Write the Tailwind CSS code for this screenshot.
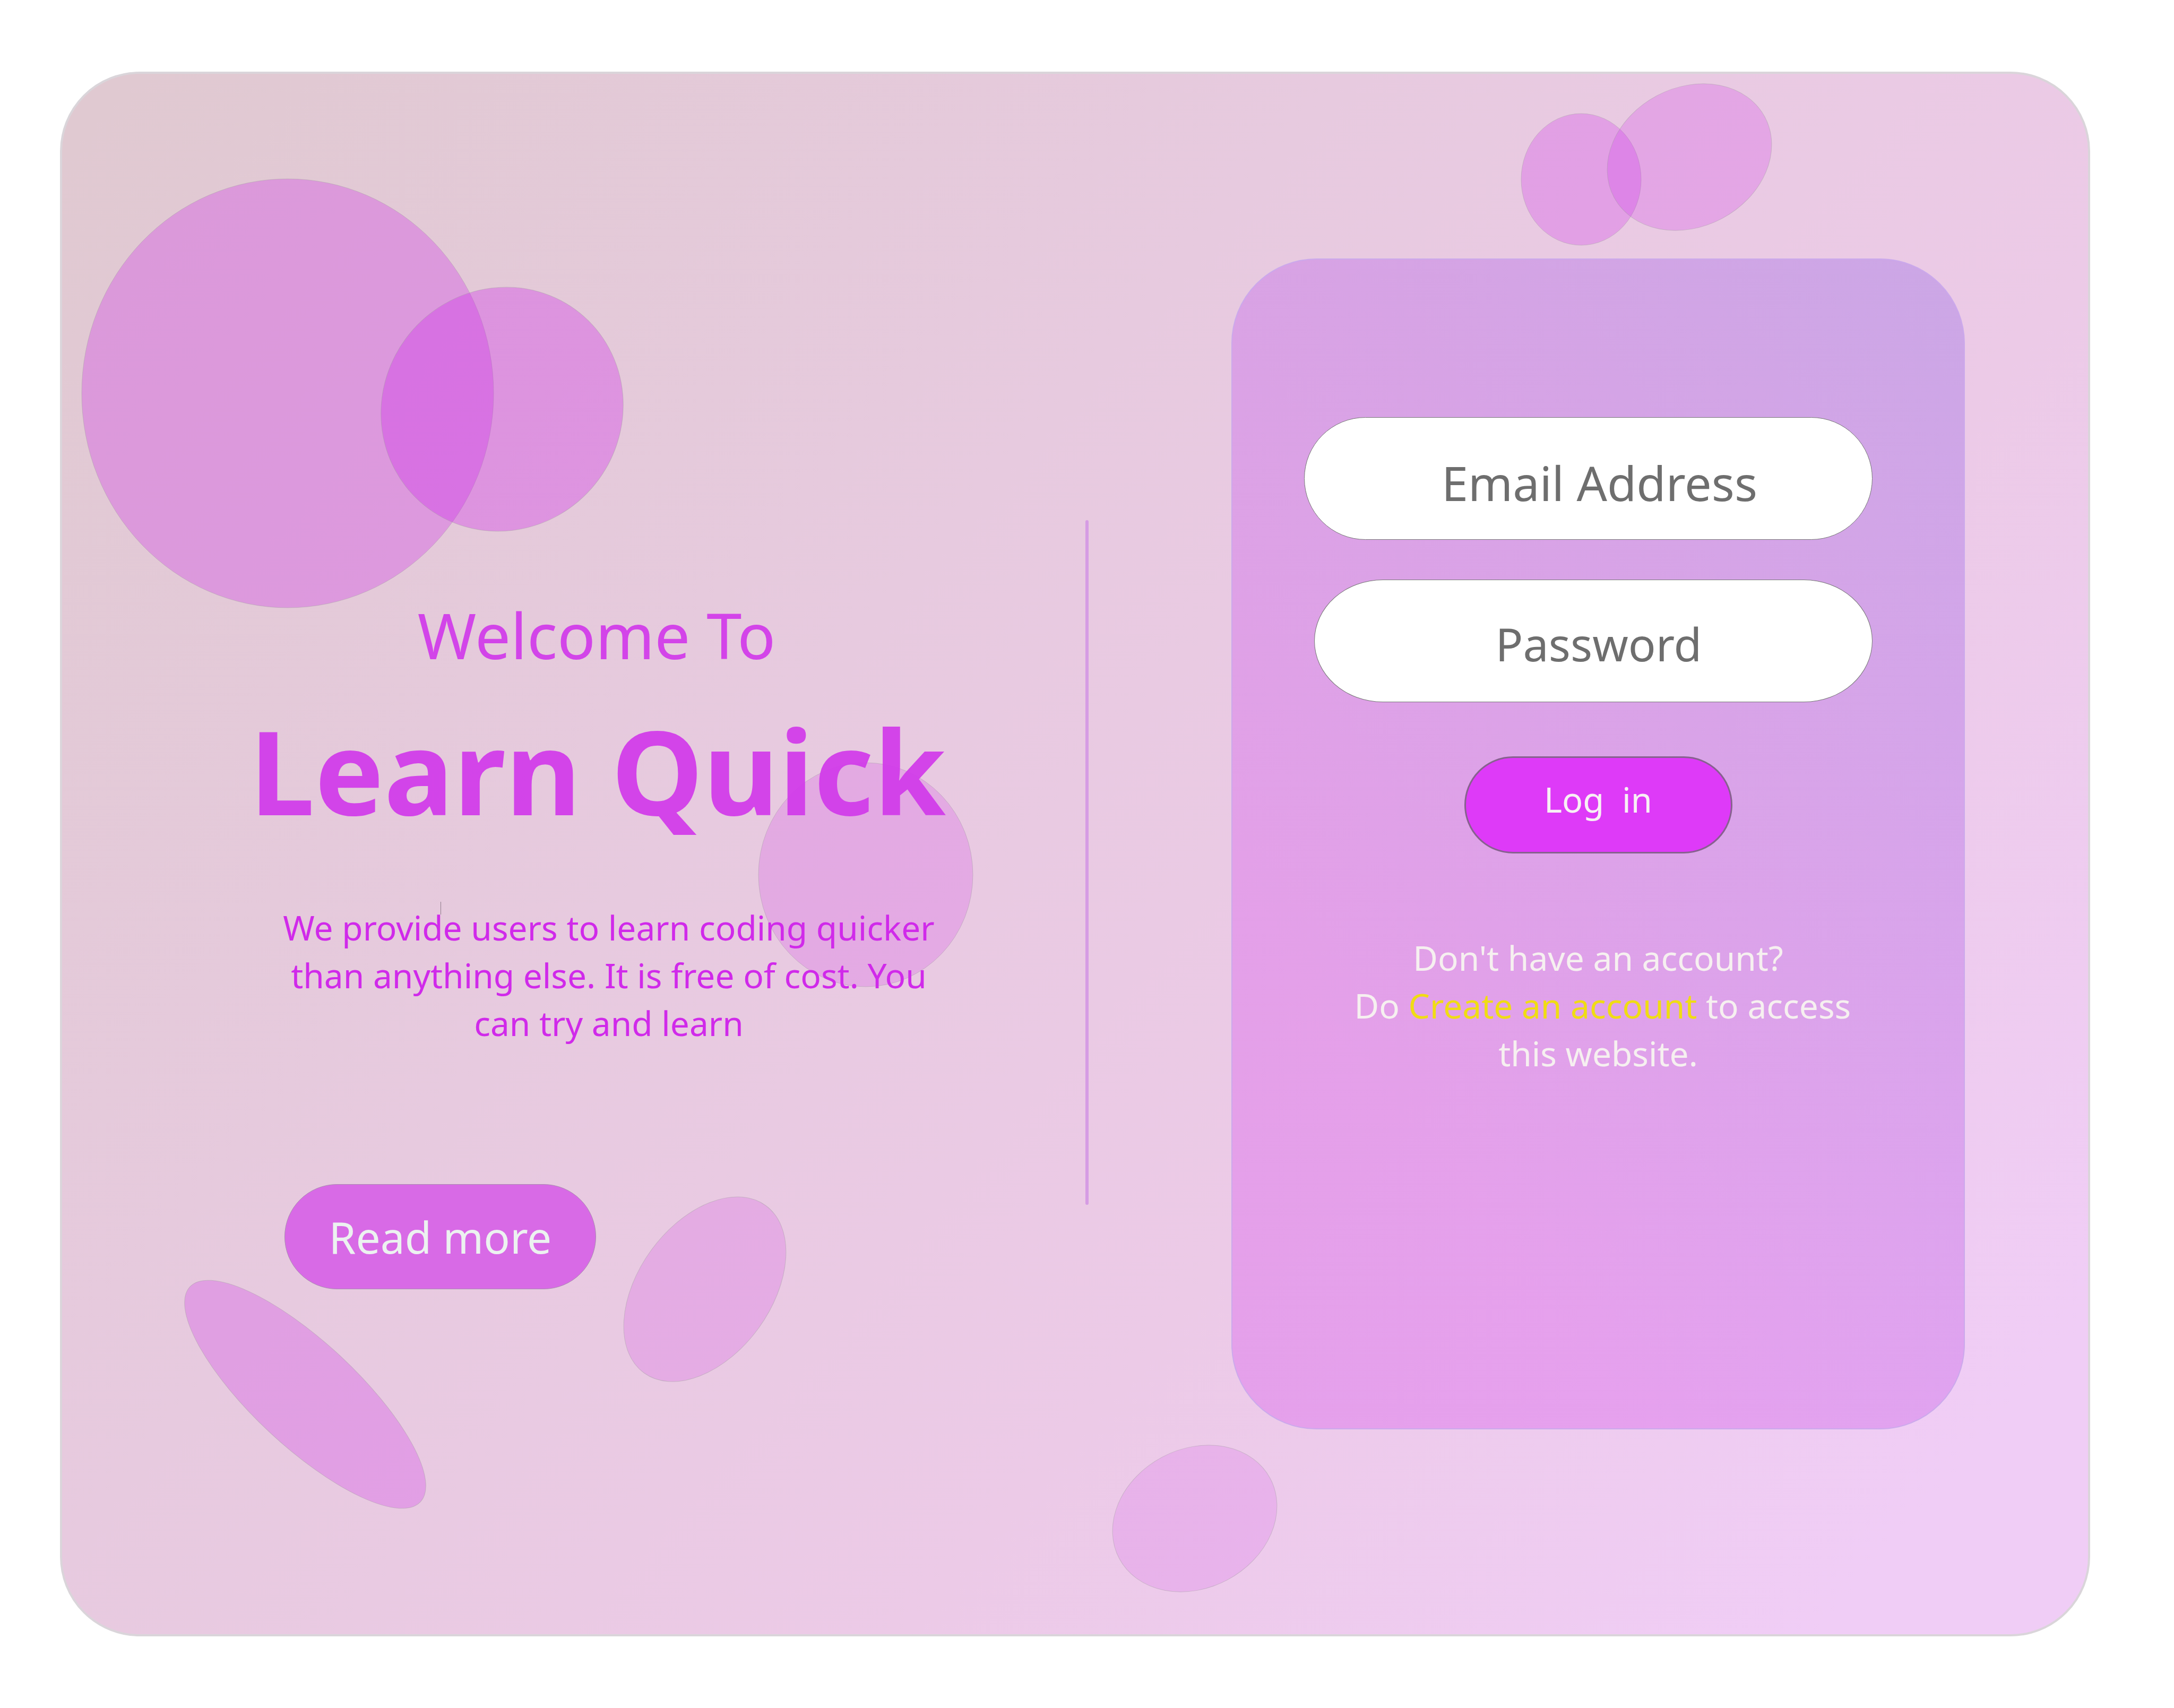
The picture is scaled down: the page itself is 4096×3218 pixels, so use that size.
<!DOCTYPE html>
<html lang="en">
<head>
<meta charset="utf-8">
<meta name="viewport" content="width=device-width, initial-scale=1">
<title>Learn Quick</title>
<script src="https://cdn.jsdelivr.net/npm/@tailwindcss/browser@4"></script>
</head>
<body class="bg-white font-['Noto_Sans','Open_Sans',sans-serif]">
<div class="relative flex min-h-screen pt-[135px] pr-[158px] pb-[135px] pl-[113px]">
  <main class="flex flex-1 rounded-[150px] border-4 border-[#dad5da] bg-[linear-gradient(131deg,#e0c9d1_2%,#e7cadf_38%,#eccae7_65%,#f0cdf6_92%)]">

    <section class="relative z-10 flex-1 pt-[977px] pl-[349px]">
      <div class="w-[1336px]">
        <h1 class="text-center text-[#d13aea]/93">
          <span class="block pr-5 text-[119px] leading-[160px]">Welcome To</span>
          <span class="mt-[27px] block pr-4 text-[219px] leading-[296px] font-bold whitespace-nowrap">Learn Quick</span>
        </h1>
        <p class="mt-[104px] pl-[26px] text-center text-[64px] leading-[90px] whitespace-nowrap text-[#d02aea]">We provide users to learn coding quicker<br>than anything else. It is free of cost. You<br>can try and learn</p>
        <button type="button" class="mt-[258px] ml-[70px] h-[198px] w-[587px] rounded-full border border-[#a98bb0] bg-[#d86ae6] text-[82px] text-[#ecf2f0]">Read more</button>
      </div>
    </section>

    <div class="relative z-10 mt-[841px] h-[1290px] w-1.5 rounded-full bg-[#d69ce4]"></div>

    <section class="relative z-10 mt-[348px] mr-[232px] mb-[386px] ml-[269px] flex w-[1382px] flex-col items-center rounded-[160px] border-2 border-[#cba9ec] bg-[linear-gradient(52deg,#dd76ec80_25%,#c37de880_66%,#ab84e680_100%)] bg-origin-border">
      <form class="contents">
        <div class="mt-[297px] mr-[37px] flex w-[1071px] flex-col items-end gap-[75px]">
          <input type="email" aria-label="Email Address" placeholder="Email Address" class="h-[231px] w-full rounded-full border border-[#777] bg-white pt-[14px] pl-[42px] text-center text-[90px] text-[#6e6e6e] placeholder:text-[#6e6e6e]">
          <input type="password" aria-label="Password" placeholder="Password" class="h-[231px] w-[1052px] rounded-[130px/116px] border border-[#777] bg-white pt-[10px] pl-5 text-center text-[86px] text-[#6e6e6e] placeholder:text-[#6e6e6e]">
        </div>
        <button type="submit" class="mt-[102px] h-[183px] w-[505px] rounded-full border-3 border-[#87618f] bg-[#de3af8] pb-[20px] text-[65px] text-[#f8f0f4]">Log&nbsp; in</button>
      </form>
      <p class="mt-[152px] text-center text-[64px] leading-[90px] whitespace-nowrap text-[#f6f0f0]">Don't have an account?<br>&nbsp;Do <a href="#" class="text-[#f0dc14]">Create an account</a> to access<br>this website.</p>
    </section>
  </main>

  <!-- Decorative bubbles -->
  <svg class="pointer-events-none absolute inset-0 h-full w-full" viewBox="0 0 4096 3218" preserveAspectRatio="none" fill="#cd1aee" stroke="#9a9a9a" stroke-opacity=".4" aria-hidden="true">
    <ellipse cx="542" cy="741" rx="388" ry="404" fill-opacity=".275"/>
    <ellipse cx="946" cy="771" rx="233" ry="225" transform="rotate(-51 946 771)" fill-opacity=".306"/>
    <ellipse cx="1631" cy="1648" rx="202" ry="211" fill-opacity=".18"/>
    <ellipse cx="575" cy="2627" rx="297" ry="98" transform="rotate(43 575 2627)" fill-opacity=".24"/>
    <ellipse cx="1328" cy="2429" rx="195" ry="125" transform="rotate(-54 1328 2429)" fill-opacity=".165"/>
    <ellipse cx="2979" cy="338" rx="113" ry="124" fill-opacity=".235"/>
    <ellipse cx="3183" cy="296" rx="161" ry="131" transform="rotate(-28 3183 296)" fill-opacity=".2"/>
    <ellipse cx="2251" cy="2861" rx="161" ry="131" transform="rotate(-28 2251 2861)" fill-opacity=".135"/>
    <path d="M830.5 1699v24" stroke="#8f7c8b" stroke-opacity="1"/>
  </svg>
</div>
</body>
</html>
